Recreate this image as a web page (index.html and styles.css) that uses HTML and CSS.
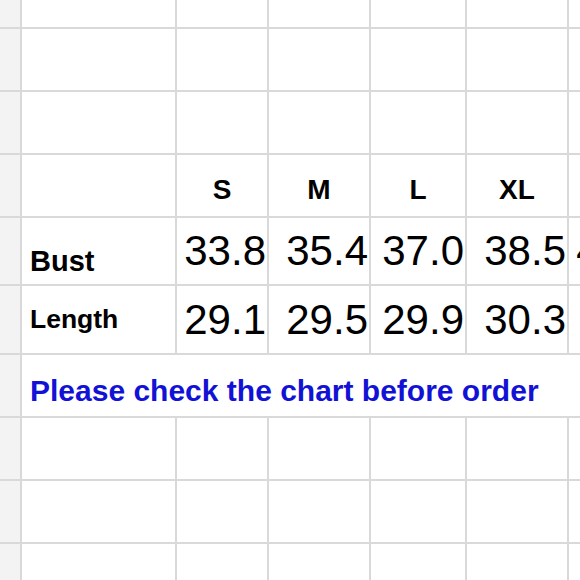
FILE: index.html
```html
<!DOCTYPE html>
<html lang="en">
<head>
<meta charset="utf-8">
<title>Size chart</title>
<link rel="stylesheet" href="styles.css">
</head>
<body>
<div class="sheet">
  <div class="rh"></div><div class="c"></div><div class="c"></div><div class="c"></div><div class="c"></div><div class="c"></div><div class="c"></div>
  <div class="rh"></div><div class="c"></div><div class="c"></div><div class="c"></div><div class="c"></div><div class="c"></div><div class="c"></div>
  <div class="rh"></div><div class="c"></div><div class="c"></div><div class="c"></div><div class="c"></div><div class="c"></div><div class="c"></div>

  <div class="rh"></div><div class="c"></div>
  <div class="c size">S</div><div class="c size">M</div><div class="c size">L</div><div class="c size">XL</div><div class="c"></div>

  <div class="rh"></div><div class="c label label-bust">Bust</div>
  <div class="c num">33.8</div><div class="c num">35.4</div><div class="c num">37.0</div><div class="c num">38.5</div><div class="c num">40.1</div>

  <div class="rh"></div><div class="c label label-length">Length</div>
  <div class="c num">29.1</div><div class="c num">29.5</div><div class="c num">29.9</div><div class="c num">30.3</div><div class="c"></div>

  <div class="rh"></div><div class="c note">Please check the chart before order</div>

  <div class="rh"></div><div class="c"></div><div class="c"></div><div class="c"></div><div class="c"></div><div class="c"></div><div class="c"></div>
  <div class="rh"></div><div class="c"></div><div class="c"></div><div class="c"></div><div class="c"></div><div class="c"></div><div class="c"></div>
  <div class="rh"></div><div class="c"></div><div class="c"></div><div class="c"></div><div class="c"></div><div class="c"></div><div class="c"></div>
</div>
</body>
</html>
```

FILE: styles.css
```css
html, body {
  margin: 0;
  padding: 0;
  background: #ffffff;
  overflow: hidden;
}

.sheet {
  display: grid;
  grid-template-columns: 20px 153px 90px 100px 94px 100px 90px;
  grid-template-rows: 27px 61px 61px 61px 66px 67px 61px 61px 61px 40px;
  gap: 2px;
  background: #d9d9d9;
  width: 665px;
  font-family: "Liberation Sans", Arial, sans-serif;
  color: #000000;
}

.rh {
  background: #f3f3f3;
}

.c {
  background: #ffffff;
  display: flex;
  white-space: nowrap;
  overflow: visible;
}

.size {
  justify-content: center;
  align-items: flex-end;
  padding-bottom: 12px;
  font-weight: bold;
  font-size: 28px;
  line-height: 1;
}

.label {
  padding-left: 8px;
  font-weight: bold;
  line-height: 1;
}

.label-bust {
  align-items: flex-end;
  padding-bottom: 8px;
  font-size: 29px;
}

.label-length {
  align-items: center;
  font-size: 26.5px;
}

.num {
  justify-content: flex-end;
  align-items: center;
  padding-right: 1px;
  font-size: 42px;
  line-height: 1;
}

.note {
  grid-column: 2 / -1;
  align-items: flex-end;
  padding: 0 0 10px 8px;
  font-weight: bold;
  font-size: 30px;
  line-height: 1;
  color: #1212d6;
}
```
